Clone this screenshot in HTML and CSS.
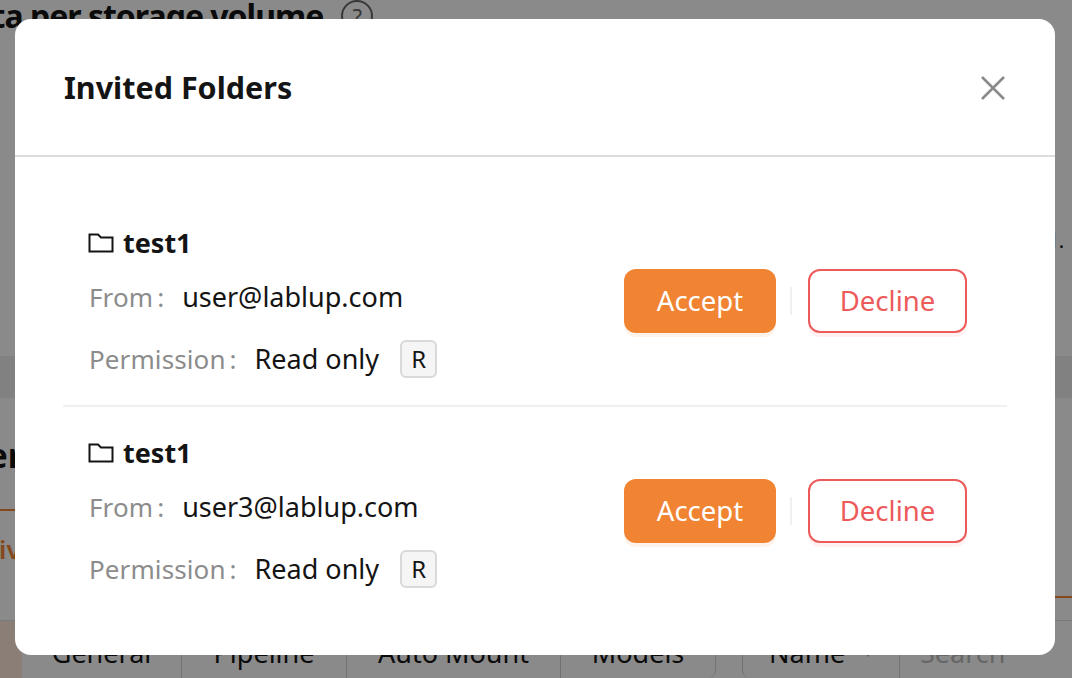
FILE: index.html
```html
<!DOCTYPE html>
<html lang="en">
<head>
<meta charset="utf-8">
<title>Invited Folders</title>
<link rel="stylesheet" href="styles.css">
</head>
<body>
<div class="page">
  <h2 class="page-title">Data per storage volume <span class="help">?</span></h2>
  <div class="page-note">d.</div>
  <div class="band"></div>
  <h2 class="section-title">Folder</h2>
  <div class="tabs">
    <div class="tab-active">Active</div>
    <div class="tab-rest"></div>
  </div>
  <div class="table-head">
    <div class="head-corner"></div>
    <div class="segments">
      <span class="segment seg-general">General</span>
      <span class="segment seg-pipeline">Pipeline</span>
      <span class="segment seg-automount">Auto Mount</span>
      <span class="segment seg-models">Models</span>
    </div>
    <div class="search-group">
      <span class="segment seg-name">Name <i class="caret">&#9662;</i></span>
      <span class="search">Search</span>
    </div>
  </div>
</div>
<div class="scrim"></div>
<section class="modal">
  <header class="modal-header">
    <h1 class="modal-title">Invited Folders</h1>
    <svg class="close" viewBox="0 0 26 26" width="26" height="26"><path d="M2 2 24 24M24 2 2 24"/></svg>
  </header>
  <div class="modal-body">
    <article class="invite">
      <div class="invite-info">
        <div class="folder-name">
          <svg class="folder" viewBox="0 0 26 20" width="26" height="20"><path d="M1.500 1.500h8.500l3 3h11.500v14H1.500z"/></svg>
          <span>test1</span>
        </div>
        <div class="meta"><span class="meta-label">From</span><span class="colon">:</span><span>user@lablup.com</span></div>
        <div class="meta"><span class="meta-label">Permission</span><span class="colon">:</span><span>Read only</span><span class="perm-tag">R</span></div>
      </div>
      <div class="actions">
        <button class="btn accept">Accept</button>
        <span class="btn-divider"></span>
        <button class="btn decline">Decline</button>
      </div>
    </article>
    <article class="invite">
      <div class="invite-info">
        <div class="folder-name">
          <svg class="folder" viewBox="0 0 26 20" width="26" height="20"><path d="M1.500 1.500h8.500l3 3h11.500v14H1.500z"/></svg>
          <span>test1</span>
        </div>
        <div class="meta"><span class="meta-label">From</span><span class="colon">:</span><span>user3@lablup.com</span></div>
        <div class="meta"><span class="meta-label">Permission</span><span class="colon">:</span><span>Read only</span><span class="perm-tag">R</span></div>
      </div>
      <div class="actions">
        <button class="btn accept">Accept</button>
        <span class="btn-divider"></span>
        <button class="btn decline">Decline</button>
      </div>
    </article>
  </div>
</section>
</body>
</html>
```
FILE: styles.css
```css
* { box-sizing: border-box; }
html, body { margin: 0; height: 100%; }
body {
  width: 1072px;
  height: 678px;
  overflow: hidden;
  background: #fbfbfb;
  font-family: "Noto Sans", "Open Sans", sans-serif;
  color: #141414;
}
.page { height: 678px; overflow: hidden; }
.page-title {
  display: flex;
  align-items: flex-start;
  gap: 18px;
  height: 38px;
  margin: 0 0 0 -49px;
  font-size: 32px;
  line-height: 32px;
  font-weight: 700;
  letter-spacing: -1px;
  white-space: nowrap;
}
.help {
  display: block;
  flex: none;
  width: 32px;
  height: 32px;
  border: 2px solid #666;
  border-radius: 50%;
  color: #666;
  font-size: 22px;
  line-height: 28px;
  letter-spacing: 0;
  text-align: center;
  font-weight: 400;
}
.page-note { height: 30px; margin-top: 188px; padding-right: 6px; text-align: right; font-size: 20px; line-height: 30px; letter-spacing: 2px; }
.band { height: 42px; margin-top: 100px; background: #ececec; }
.section-title { height: 74px; margin: 37px 0 0 -84px; font-size: 34px; line-height: 40px; }
.tabs { display: flex; height: 89px; }
.tab-active {
  flex: none;
  width: 120px;
  margin-left: -42px;
  padding-top: 20px;
  border-top: 2px solid #f28432;
  color: #f28432;
  font-size: 26px;
  line-height: 36px;
  font-weight: 600;
}
.tab-rest { flex: 1; border-bottom: 2px solid #f28432; }
.table-head { display: flex; height: 58px; margin-top: 22px; border-top: 1px solid #dcdcdc; }
.head-corner { flex: none; width: 22px; background: #fde6d8; }
.segments { display: flex; }
.segment {
  display: flex;
  align-items: center;
  justify-content: center;
  height: 100%;
  padding-top: 5px;
  border-right: 1px solid #cfcfcf;
  font-size: 27px;
  white-space: nowrap;
}
.seg-general { width: 160px; }
.seg-pipeline { width: 165px; }
.seg-automount { width: 214px; }
.seg-models { width: 155px; border-radius: 0 0 8px 0; }
.search-group { display: flex; margin-left: 26px; border-left: 1px solid #cfcfcf; border-radius: 0 0 0 8px; }
.seg-name { width: 157px; justify-content: flex-start; gap: 20px; padding-left: 26px; }
.caret { color: #999; font-size: 12px; font-style: normal; }
.search { display: flex; align-items: center; padding: 5px 0 0 20px; color: #bbb; font-size: 27px; }
.scrim { position: fixed; inset: 0; background: rgba(0, 0, 0, 0.45); }
.modal {
  position: fixed;
  left: 15px;
  top: 19px;
  width: 1040px;
  height: 636px;
  background: #fff;
  border-radius: 16px;
}
.modal-header {
  display: flex;
  align-items: center;
  justify-content: space-between;
  height: 138px;
  padding: 0 49px;
  border-bottom: 2px solid #dcdcdc;
}
.modal-title { margin: 0; color: #141414; font-size: 30.500px; line-height: 38px; font-weight: 700; }
.close { margin-top: 2px; fill: none; stroke: #8a8a8a; stroke-width: 2.6; }
.modal-body { padding: 40px 48px 0; }
.invite {
  display: flex;
  align-items: center;
  justify-content: space-between;
  height: 210px;
  padding: 0 40px 0 26px;
  border-bottom: 2px solid #f0f0f0;
}
.invite:last-child { border-bottom-color: transparent; }
.invite-info { display: flex; flex-direction: column; gap: 16px; padding-top: 5px; }
.folder-name {
  display: flex;
  align-items: center;
  gap: 9px;
  margin-bottom: -3px;
  font-size: 27px;
  line-height: 36px;
  font-weight: 700;
}
.folder { margin-left: -1px; fill: none; stroke: #141414; stroke-width: 2; }
.meta { display: flex; align-items: center; color: #141414; font-size: 27px; line-height: 46px; }
.meta-label { color: #8c8c8c; font-size: 26px; letter-spacing: 0.100px; }
.colon { margin: 0 18px 0 4px; color: #8c8c8c; font-size: 26px; }
.perm-tag {
  display: inline-flex;
  align-items: center;
  justify-content: center;
  width: 37px;
  height: 38px;
  margin-left: 21px;
  border: 2px solid #d9d9d9;
  border-radius: 6px;
  background: #f5f5f5;
  font-size: 24px;
}
.actions { display: flex; align-items: center; }
.btn { height: 64px; padding: 0 0 2px; border-radius: 12px; font-family: inherit; font-size: 27.500px; }
.accept { width: 152px; border: 0; background: #f08433; color: #fff; box-shadow: 0 4px 0 #fef3ea; }
.decline { width: 159px; border: 2px solid #ec5a5a; background: #fff; color: #ec5a5a; box-shadow: 0 4px 0 #fff1f0; }
.btn-divider { width: 2px; height: 28px; margin: 0 16px 0 14px; background: #f0f0f0; }
```
